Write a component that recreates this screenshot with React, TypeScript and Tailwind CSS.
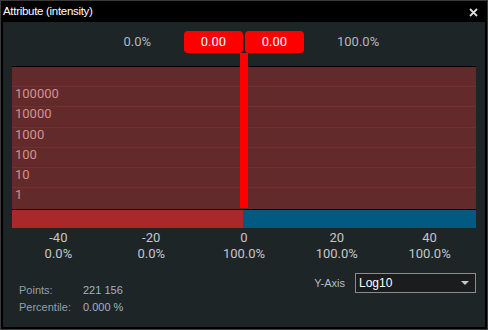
import React from "react";

const yLabels = ["100000", "10000", "1000", "100", "10", "1"];
const axis = [
  ["-40", "0.0%"],
  ["-20", "0.0%"],
  ["0", "100.0%"],
  ["20", "100.0%"],
  ["40", "100.0%"],
];

export default function App() {
  return (
    <div className="w-[488px] h-[330px] bg-black border border-[#3a3a3a] flex flex-col overflow-hidden">
      {/* title bar */}
      <div className="h-[21px] flex items-center justify-between pl-[2px] pr-[9px] text-white text-[11.5px] tracking-[-0.3px] font-['Liberation_Sans',sans-serif]">
        <span className="leading-none">Attribute (intensity)</span>
        <svg width="9" height="9" viewBox="0 0 9 9" className="mt-[1px]">
          <path d="M1 1 L8 8 M8 1 L1 8" stroke="#dcdcdc" strokeWidth="1.8" />
        </svg>
      </div>
      {/* body */}
      <div className="flex-1 mx-[2px] mb-[2px] bg-[#1e2527] flex flex-col pl-[9px] pr-[9px] font-['Roboto',sans-serif]">
        <div className="relative w-[464px]">
          {/* header */}
          <div className="h-[44px] pt-[9px] flex items-start text-[13px] text-[#b4b8ba]">
            <div className="w-[172px] flex justify-end pr-[33px] pt-[3px] leading-[16px]">0.0%</div>
            <div className="w-[59px] h-[22px] bg-[#ff0000] rounded-[4px] text-white flex items-center justify-center">0.00</div>
            <div className="w-[59px] h-[22px] ml-[2px] bg-[#ff0000] rounded-[4px] text-white flex items-center justify-center">0.00</div>
            <div className="pl-[33px] pt-[3px] leading-[16px]">100.0%</div>
          </div>
          {/* plot */}
          <div className="border-t border-black h-[143px] bg-[#632a2c] flex flex-col">
            <div className="h-[19px]" />
            {yLabels.map((l) => (
              <div key={l} className="h-[20.3px] border-t border-[#6c3234] text-[13px] leading-[14px] text-[#d3918f] pl-[3px]">
                {l}
              </div>
            ))}
          </div>
          {/* bar */}
          <div className="border-t border-black h-[19px] flex">
            <div className="w-[231px] bg-[#a9292a]" />
            <div className="flex-1 bg-[#025a83]" />
          </div>
          {/* red line overlay */}
          <div className="absolute left-[228px] top-[31px] w-[8px] h-[155px] bg-[#ff0000]" />
          {/* axis */}
          <div className="grid grid-cols-5 pt-[2px] text-[13px] text-[#c4c6c8] leading-[16px]">
            {axis.map(([a, p], i) => (
              <div key={i} className="flex flex-col items-center">
                <span>{a}</span>
                <span>{p}</span>
              </div>
            ))}
          </div>
        </div>
        {/* footer */}
        <div className="flex justify-between items-start font-['Liberation_Sans',sans-serif] text-[11px] mt-[11px]">
          <div className="pl-[7px] pt-[10px] grid grid-cols-[64px_auto] gap-y-[3px] leading-[14px]">
            <span className="text-[#8fa0ae]">Points:</span>
            <span className="text-[#9fb4c6]">221 156</span>
            <span className="text-[#8fa0ae]">Percentile:</span>
            <span className="text-[#9fb4c6]">0.000 %</span>
          </div>
          <div className="flex items-center gap-[10px] h-[20px]">
            <span className="text-[#b4bcc4]">Y-Axis</span>
            <div className="w-[121px] h-[20px] border border-[#8c8c8c] bg-[#1a1c1d] flex items-center justify-between pl-[3px] pr-[6px] text-white text-[12px]">
              <span>Log10</span>
              <svg width="8" height="5" viewBox="0 0 8 5">
                <path d="M0 0 L8 0 L4 4 Z" fill="#c8c8c8" />
              </svg>
            </div>
          </div>
        </div>
      </div>
    </div>
  );
}
